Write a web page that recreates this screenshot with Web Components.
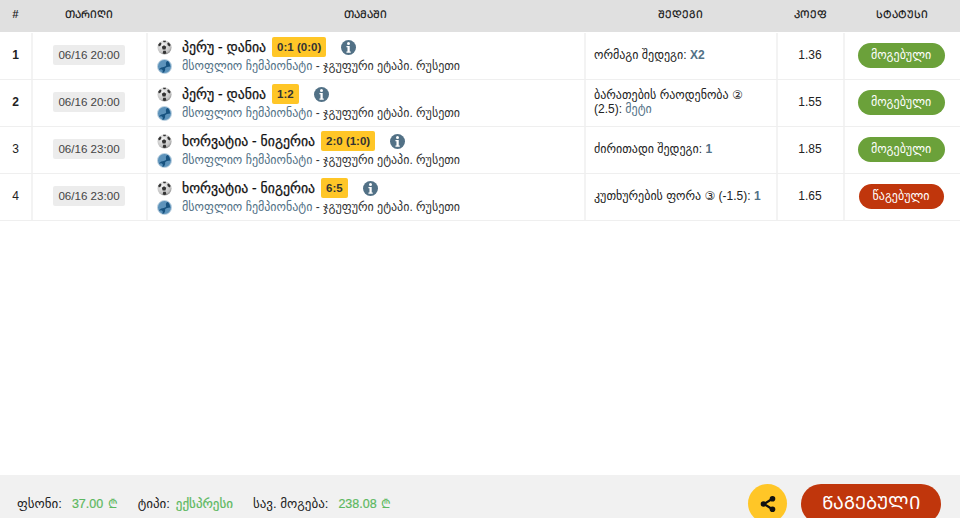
<!DOCTYPE html>
<html><head><meta charset="utf-8">
<style>html,body{margin:0;padding:0;background:#fff;overflow:hidden}body{width:960px;height:518px;font-family:"Liberation Sans","DejaVu Sans",sans-serif}</style>
</head><body>
<bet-page></bet-page>
<script>
const F='"Liberation Sans","DejaVu Sans",sans-serif';
const COLS='grid-template-columns:32px 115px 438px 192px 67px 116px;';
class BetPage extends HTMLElement{constructor(){super();this.attachShadow({mode:'open'}).innerHTML=`<style>
:host{display:flex;flex-direction:column;width:960px;height:518px;font-family:${F};overflow:hidden}
.head{display:grid;${COLS}height:32px;margin-bottom:1px;padding-bottom:4px;box-sizing:border-box;background:#e0e0e0;font-size:10.600px;color:#111;align-items:center;text-align:center;-webkit-text-stroke:.15px #111}
.head b{font-weight:400;padding-right:1px}
.sp{flex:1}
</style>
<div class="head"><b>#</b><b>ᲗᲐᲠᲘᲦᲘ</b><b>ᲗᲐᲛᲐᲨᲘ</b><b>ᲨᲔᲓᲔᲒᲘ</b><b>ᲙᲝᲔᲤ</b><b>ᲡᲢᲐᲢᲣᲡᲘ</b></div>
<bet-row n="1" bold date="06/16 20:00" match="პერუ - დანია" score="0:1 (0:0)" pre="ორმაგი შედეგი: " val="X2" strong odd="1.36" st="მოგებული"></bet-row>
<bet-row n="2" bold date="06/16 20:00" match="პერუ - დანია" score="1:2" first="ბარათების რაოდენობა ②" pre="(2.5): " val="მეტი" odd="1.55" st="მოგებული"></bet-row>
<bet-row n="3" date="06/16 23:00" match="ხორვატია - ნიგერია" score="2:0 (1:0)" pre="ძირითადი შედეგი: " val="1" strong odd="1.85" st="მოგებული"></bet-row>
<bet-row n="4" date="06/16 23:00" match="ხორვატია - ნიგერია" score="6:5" pre="კუთხურების ფორა ③ (-1.5): " val="1" strong odd="1.65" st="წაგებული" lost></bet-row>
<div class="sp"></div>
<bet-footer></bet-footer>`;}}
const ball=`<svg width="15" height="15" viewBox="0 0 16 16"><defs><radialGradient id="g" cx=".4" cy=".35" r=".75"><stop offset="0" stop-color="#f4f4f4"/><stop offset=".7" stop-color="#c4c4c4"/><stop offset="1" stop-color="#777"/></radialGradient></defs><circle cx="8" cy="8" r="7.500" fill="url(#g)"/><path d="M7.500 5.500l2.400 1.800-.9 2.800h-3l-.9-2.800zM1.200 5l2-2.400 1.500.6-.4 2.300-2.300 1.300zM14.500 5l-2-2.400-1.500.6.4 2.300 2.300 1.300zM6 14.500l.7-3h2.600l.7 3-2 .5zM6.300 .8l3.400 0-.7 1.600h-2z" fill="#333"/></svg>`;
const globe=`<svg width="15" height="15" viewBox="0 0 16 16"><circle cx="8" cy="8" r="7.500" fill="#5d93bb"/><circle cx="8" cy="8" r="7.500" fill="none" stroke="#c3d5e2" stroke-width="1"/><path d="M11.500 2.200C9 3 9.500 5 9.800 6.500 10 8 7.500 8.500 6 8.800 4 9.200 2.500 10 2.200 11.500 4 10.500 5.500 10.800 6 12c.4 1.200-.2 2.300-.4 3 2.500-.6 3.500-3 3-5 1-1.500 3-1.500 5.500-2C14 6 13 3.500 11.500 2.200z" fill="#17527f"/></svg>`;
const info=`<svg width="15" height="15" viewBox="0 0 16 16"><circle cx="8" cy="8" r="8" fill="#527186"/><circle cx="8" cy="3.700" r="1.600" fill="#fff"/><path d="M5.800 6.500H9.300V12.200H10.400V13.500H5.800V12.200H6.900V7.800H5.800z" fill="#fff"/></svg>`;
class BetRow extends HTMLElement{connectedCallback(){const a=n=>this.getAttribute(n);const lost=this.hasAttribute('lost');
this.attachShadow({mode:'open'}).innerHTML=`<style>
:host{display:grid;${COLS}height:47px;border-bottom:1px solid #efefef;box-sizing:border-box;font-size:12px;color:#222}
.c{border-right:2px solid #f3f3f3;display:flex;align-items:center;justify-content:center;box-sizing:content-box;min-width:0;padding-bottom:2px;margin-right:-1px}
.c:last-child{border-right:0;margin-right:0;padding-right:2px;box-sizing:border-box}
.n{font-weight:${this.hasAttribute('bold')?700:400};box-sizing:border-box}
.dc{box-sizing:border-box}
.d{background:#ececec;color:#444;border-radius:2px;padding:0 5px;height:20px;line-height:20px;font-size:11.600px;white-space:nowrap}
.m{padding-left:10px;display:block;padding-top:4px;padding-bottom:0;box-sizing:border-box}
.l{display:flex;align-items:center;height:20px;gap:10px;white-space:nowrap}
.t{font-size:13.800px;color:#111;-webkit-text-stroke:.25px #111}
.s{background:#ffc627;border-radius:2px;height:20px;line-height:20px;padding:0 5px;font-size:11.500px;font-weight:700;color:#333;margin-left:-4px}
.i{display:flex;margin-left:5px}
.lg{font-size:12px;color:#333;height:18px}.lg span{color:#527186}
.r{justify-content:flex-start;padding:0 10px 2px 9px;font-size:12px;line-height:14px;color:#222;box-sizing:border-box}
.r span{color:#527186;font-weight:${this.hasAttribute('strong')?700:400}}
.o{font-size:12px;color:#222;box-sizing:border-box}
.st{height:25px;line-height:24px;border-radius:13px;color:#fff;font-size:12px;text-align:center;background:${lost?'#c0360c':'#6ba13a'};width:${lost?85:87}px}
</style>
<div class="c n">${a('n')}</div>
<div class="c dc"><span class="d">${a('date')}</span></div>
<div class="c m"><div class="l">${ball}<span class="t">${a('match')}</span><span class="s">${a('score')}</span><span class="i">${info}</span></div>
<div class="l lg">${globe}<div><span>მსოფლიო ჩემპიონატი</span> - ჯგუფური ეტაპი. რუსეთი</div></div></div>
<div class="c r"><div>${a('first')?`<div>${a('first')}</div>`:''}${a('pre')}<span>${a('val')}</span></div></div>
<div class="c o">${a('odd')}</div>
<div class="c"><div class="st">${a('st')}</div></div>`;}}
class BetFooter extends HTMLElement{constructor(){super();this.attachShadow({mode:'open'}).innerHTML=`<style>
:host{display:flex;height:43px;background:#f1f1f1;overflow:hidden;font-size:13px;color:#222;align-items:flex-start;padding-top:9px;box-sizing:border-box}
.f{display:flex;align-items:center;height:39px;padding:0 0 1px 17px;box-sizing:border-box;white-space:nowrap;flex:1}
.g{color:#5cb860;font-size:12.500px;margin-left:10px;-webkit-text-stroke:.2px #5cb860}
.g.e{font-size:13px;margin-left:6px}
.g i{font-style:normal;-webkit-text-stroke:0;margin-left:1px}
.it{margin-right:20px;display:flex;align-items:baseline}
.sh{width:39px;height:39px;border-radius:50%;background:#ffc627;display:flex;align-items:center;justify-content:center;margin-right:14px}
.btn{width:140px;height:40px;border-radius:20px;background:#c0360c;color:#fff;font-size:18px;line-height:38px;text-align:center;margin-right:19px}
</style>
<div class="f"><span class="it">ფსონი:<span class="g">37.00 <i>₾</i></span></span><span class="it">ტიპი:<span class="g e">ექსპრესი</span></span><span class="it">სავ. მოგება:<span class="g">238.08 <i>₾</i></span></span></div>
<div class="sh"><svg width="18" height="18" viewBox="0 0 18 18"><path d="M13 4L5 9l8 5" fill="none" stroke="#111" stroke-width="2.200"/><circle cx="13.500" cy="3.800" r="2.800" fill="#111"/><circle cx="4.500" cy="9" r="2.800" fill="#111"/><circle cx="13.500" cy="14.200" r="2.800" fill="#111"/></svg></div>
<div class="btn">ᲬᲐᲒᲔᲑᲣᲚᲘ</div>`;}}
customElements.define('bet-page',BetPage);customElements.define('bet-row',BetRow);customElements.define('bet-footer',BetFooter);
</script></body></html>
